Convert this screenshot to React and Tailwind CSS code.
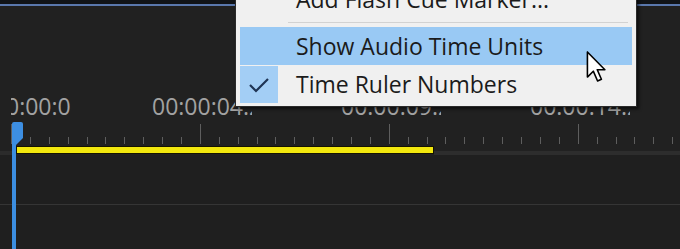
import React from "react";

const TICK_COUNT = 36;

const labels = ["00:00:04:23", "00:00:09:23", "00:00:14:23"];

const Cursor = () => (
  <svg width="20" height="31" viewBox="0 0 12 19.5" className="block">
    <path
      d="M0.6 0.6 L0.6 16.4 L4.3 12.7 L7 18.9 L9.4 17.8 L6.8 11.8 L11.6 11.8 Z"
      fill="#ffffff"
      stroke="#000000"
      strokeWidth="1"
      strokeLinejoin="round"
    />
  </svg>
);

const ContextMenu = () => (
  <div className="absolute left-[235px] top-[-25px] w-[402px] bg-[#f0f0f0] border border-[#2a2a2a] shadow-[2px_2px_3px_rgba(0,0,0,0.6)] px-[4px] pt-[4px] pb-[3px] text-[23px] text-[#1b1b1b]">
    <div className="h-[38px] leading-[38px] pl-[56px] whitespace-nowrap">Add Flash Cue Marker...</div>
    <div className="h-px bg-[#d2d2d2] ml-[48px] my-[4px] mr-[4px]" />
    <div className="h-[38px] leading-[38px] pl-[56px] bg-[#99c9f4] whitespace-nowrap">Show Audio Time Units</div>
    <div className="flex h-[37px] mt-[1px]">
      <div className="w-[38px] h-full bg-[#a3cef5] flex items-center justify-center">
        <svg width="22" height="16" viewBox="0 0 22 16">
          <path d="M2 8 L8 14 L20 2" fill="none" stroke="#1f3454" strokeWidth="2.2" />
        </svg>
      </div>
      <div className="pl-[18px] leading-[37px] whitespace-nowrap">Time Ruler Numbers</div>
    </div>
  </div>
);

const App = () => {
  return (
    <div className="relative w-[680px] h-[249px] overflow-hidden bg-[#212121] font-['Open_Sans',sans-serif]">
      {/* top frame */}
      <div className="h-[4px] bg-[#111418]" />
      <div className="h-[2px] bg-[#5a78ad]" />

      {/* time labels */}
      <div className="flex mt-[87px] h-[26px] leading-[26px] text-[23px] text-[#a2a2a2] whitespace-nowrap">
        <div className="w-[11px] shrink-0" />
        <div className="w-[141px] shrink-0 overflow-hidden">
          <span className="block -ml-[5px]">0:00:0</span>
        </div>
        {labels.map((l) => (
          <div key={l} className="w-[189px] shrink-0">
            <span className="block w-[100px] overflow-hidden">{l}</span>
          </div>
        ))}
      </div>

      {/* ticks */}
      <div className="flex items-end h-[22px] mt-[5px] pb-[2px] pl-[11px]">
        {Array.from({ length: TICK_COUNT }).map((_, i) => (
          <div key={i} className="w-[18.9px] shrink-0">
            <div className={`w-px bg-[#5e5e5e] ${i % 10 === 0 ? "h-[20px]" : "h-[7px]"}`} />
          </div>
        ))}
      </div>

      {/* work area bar */}
      <div className="flex items-end h-[9px]">
        <div className="w-[16px] h-[4px] bg-[#2b2b2b]" />
        <div className="w-[418px] h-[8px] bg-[#f3e80e] border border-[#161400] self-start" />
        <div className="flex-1 h-[4px] bg-[#2d2d2d]" />
      </div>

      {/* track */}
      <div className="h-[49px] bg-[#1f1f1f]" />
      <div className="h-px bg-[#353535]" />
      <div className="h-[50px] bg-[#1f1f1f]" />

      {/* playhead */}
      <svg width="11" height="24" viewBox="0 0 11 24" className="absolute left-[12px] top-[122px]">
        <path d="M0 2 Q0 0 2 0 H9 Q11 0 11 2 V16 L4 23 H0 Z" fill="#3d8fe3" />
      </svg>
      <div className="absolute left-[12px] top-[140px] bottom-0 w-[4px] bg-[#3c8ee0]" />

      <ContextMenu />

      <div className="absolute left-[586px] top-[51px]">
        <Cursor />
      </div>
    </div>
  );
};

export default App;
